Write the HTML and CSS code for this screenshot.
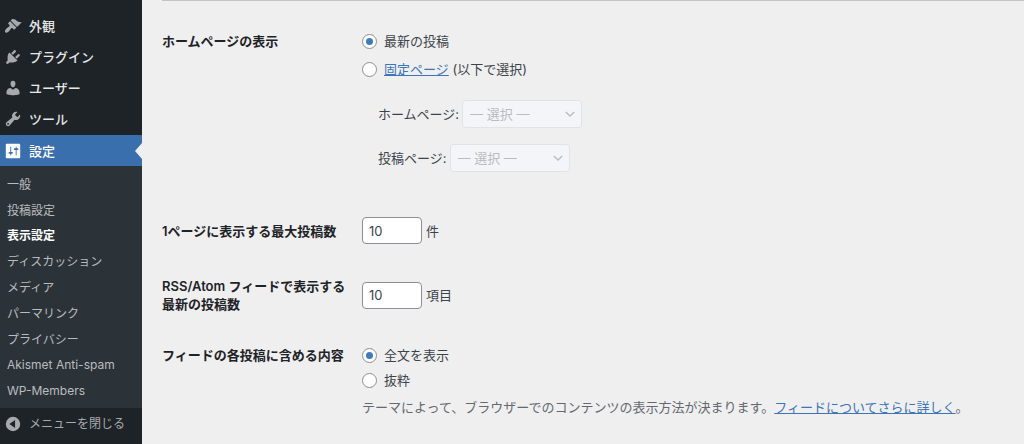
FILE: index.html
```html
<!DOCTYPE html>
<html lang="ja">
<head>
<meta charset="utf-8">
<meta name="viewport" content="width=device-width, initial-scale=1">
<title>表示設定</title>
<link rel="stylesheet" href="styles.css">
</head>
<body>
<nav class="sidebar" aria-label="メインメニュー">
  <ul class="menu">
    <li><a class="menu-link" href="#"><svg class="icon" viewBox="0 0 20 20"><path d="M14.48 11.06L7.41 3.99l1.5-1.5c.5-.56 2.3-.47 3.51.32 1.21.8 1.43 1.28 2.91 2.1 1.18.64 2.45 1.26 4.45.85zm-.71.71L6.7 4.7 4.93 6.47c-.39.39-.39 1.02 0 1.41l1.06 1.06c.39.39.39 1.03 0 1.42-.6.6-1.43 1.11-2.21 1.69-.35.26-.7.53-1.01.84C1.43 14.23.4 16.08 1.4 17.07c.99 1 2.84-.03 4.18-1.36.31-.31.58-.66.85-1.02.57-.78 1.08-1.61 1.69-2.21.39-.39 1.02-.39 1.41 0l1.06 1.06c.39.39 1.02.39 1.41 0z"/></svg>外観</a></li>
    <li><a class="menu-link" href="#"><svg class="icon" viewBox="0 0 20 20"><path d="M13.11 4.36L9.87 7.6 8 5.73l3.24-3.24c.35-.34 1.05-.2 1.56.32.52.51.66 1.21.31 1.55zm-8 1.77l.91-1.12 9.01 9.01-1.19.84c-.71.71-2.63 1.16-3.82 1.16H6.14L4.9 17.26c-.59.59-1.54.59-2.12 0-.59-.58-.59-1.53 0-2.12l1.24-1.24v-3.88c0-1.13.4-3.19 1.09-3.89zm7.26 3.97l3.24-3.24c.34-.35 1.04-.21 1.55.31.52.51.66 1.21.31 1.55l-3.24 3.25z"/></svg>プラグイン</a></li>
    <li><a class="menu-link" href="#"><svg class="icon" viewBox="0 0 20 20"><path d="M10 9.25c-2.27 0-2.73-3.44-2.73-3.44C7 4.02 7.82 2 9.97 2c2.16 0 2.98 2.02 2.71 3.81 0 0-.41 3.44-2.68 3.44zm0 2.57L12.72 10c2.39 0 4.52 2.33 4.52 4.53v2.49s-3.65 1.13-7.24 1.13c-3.65 0-7.24-1.13-7.24-1.13v-2.49c0-2.25 1.94-4.48 4.47-4.48z"/></svg>ユーザー</a></li>
    <li><a class="menu-link" href="#"><svg class="icon" viewBox="0 0 20 20"><path d="M16.68 9.77c-1.34 1.34-3.3 1.67-4.95.99l-5.41 6.52c-.99.99-2.59.99-3.58 0s-.99-2.59 0-3.57l6.52-5.42c-.68-1.65-.35-3.61.99-4.95 1.28-1.28 3.12-1.62 4.72-1.06l-2.89 2.89 2.82 2.82 2.86-2.87c.53 1.58.18 3.39-1.08 4.65zM3.81 16.21c.4.39 1.04.39 1.43 0 .4-.4.4-1.04 0-1.43-.39-.4-1.03-.4-1.43 0-.39.39-.39 1.03 0 1.43z"/></svg>ツール</a></li>
    <li><a class="menu-link current" href="#"><svg class="icon" viewBox="0 0 20 20"><path d="M18 17V3c0-.6-.4-1-1-1H3c-.6 0-1 .4-1 1v14c0 .6.4 1 1 1h14c.6 0 1-.4 1-1zM8 11h1c.55 0 1 .45 1 1s-.45 1-1 1H8v1.500c0 .28-.22.5-.5.5s-.5-.22-.5-.5V13H6c-.55 0-1-.45-1-1s.45-1 1-1h1V5.500c0-.28.22-.5.5-.5s.5.22.5.5V11zm5-2h-1c-.55 0-1-.45-1-1s.45-1 1-1h1V5.500c0-.28.22-.5.5-.5s.5.22.5.5V7h1c.55 0 1 .45 1 1s-.45 1-1 1h-1v5.500c0 .28-.22.5-.5.5s-.5-.22-.5-.5V9z"/></svg>設定</a></li>
  </ul>
  <ul class="submenu">
    <li><a href="#">一般</a></li>
    <li><a href="#">投稿設定</a></li>
    <li><a class="active" href="#" aria-current="page">表示設定</a></li>
    <li><a href="#">ディスカッション</a></li>
    <li><a href="#">メディア</a></li>
    <li><a href="#">パーマリンク</a></li>
    <li><a href="#">プライバシー</a></li>
    <li><a href="#">Akismet Anti-spam</a></li>
    <li><a href="#">WP-Members</a></li>
  </ul>
  <button class="collapse" type="button"><svg class="icon" viewBox="0 0 20 20"><path fill-rule="evenodd" d="M10 2a8 8 0 1 1 0 16 8 8 0 0 1 0-16zM12.300 5.500v9L6 10z"/></svg>メニューを閉じる</button>
</nav>
<main class="content">
  <form class="settings">
    <div class="row row-front" role="group" aria-labelledby="front-title">
      <div class="title" id="front-title">ホームページの表示</div>
      <div class="field">
        <label class="choice"><input type="radio" name="front" checked>最新の投稿</label>
        <div class="choice choice-page"><input type="radio" name="front" id="front-page"><label for="front-page"><a href="#">固定ページ</a> (以下で選択)</label></div>
        <div class="page-pickers">
          <div class="picker"><label for="home-page">ホームページ:</label>
            <span class="select-wrap"><select id="home-page" disabled><option>— 選択 —</option></select><svg class="chevron" viewBox="0 0 20 20"><path d="M4 7l6 6 6-6"/></svg></span></div>
          <div class="picker"><label for="posts-page">投稿ページ:</label>
            <span class="select-wrap"><select id="posts-page" disabled><option>— 選択 —</option></select><svg class="chevron" viewBox="0 0 20 20"><path d="M4 7l6 6 6-6"/></svg></span></div>
        </div>
      </div>
    </div>
    <div class="row row-number">
      <label class="title" for="per-page">1ページに表示する最大投稿数</label>
      <div class="field amount"><input class="number" type="text" inputmode="numeric" id="per-page" value="10">件</div>
    </div>
    <div class="row row-number">
      <label class="title" for="per-feed">RSS/Atom フィードで表示する最新の投稿数</label>
      <div class="field amount"><input class="number" type="text" inputmode="numeric" id="per-feed" value="10">項目</div>
    </div>
    <div class="row" role="group" aria-labelledby="feed-title">
      <div class="title" id="feed-title">フィードの各投稿に含める内容</div>
      <div class="field">
        <label class="choice"><input type="radio" name="feed" checked>全文を表示</label>
        <label class="choice choice-excerpt"><input type="radio" name="feed">抜粋</label>
        <p class="description">テーマによって、ブラウザーでのコンテンツの表示方法が決まります。<a href="#">フィードについてさらに詳しく</a>。</p>
      </div>
    </div>
  </form>
</main>
</body>
</html>
```
FILE: styles.css
```css
* { box-sizing: border-box; }

body {
  margin: 0;
  min-height: 100vh;
  display: flex;
  background: #efefef;
  color: #3c434a;
  font: 13px/18px Inter, "Noto Sans CJK JP", sans-serif;
}

ul { list-style: none; margin: 0; padding: 0; }
a { color: #3d74b8; }
input, select, button { font: inherit; color: inherit; margin: 0; }

/* Sidebar */
.sidebar {
  flex: 0 0 142px;
  display: flex;
  flex-direction: column;
  padding: 11px 0 4px;
  background: #1d2327;
}

.menu-link {
  display: flex;
  align-items: center;
  gap: 7px;
  height: 31px;
  padding: 0 0 2px 4px;
  color: #e6e7e8;
  font-weight: 500;
  text-decoration: none;
}

.icon {
  flex: none;
  width: 18px;
  height: 18px;
  fill: #a7aaad;
}

.current {
  position: relative;
  padding-bottom: 0;
  background: #3a6fae;
  color: #fff;
}

.current .icon { fill: #fff; }

.current::after {
  content: "";
  position: absolute;
  right: 0;
  top: 8px;
  border: solid transparent;
  border-width: 8px 7px 8px 0;
  border-right-color: #efefef;
}

.submenu {
  flex: 1;
  display: grid;
  grid-auto-rows: 1fr;
  padding: 6px 0 4px;
  background: #2c3338;
  font-size: 12px;
}

.submenu li { display: flex; align-items: center; padding-left: 7px; }
.submenu a { color: #b9bcbf; text-decoration: none; }
.submenu .active { color: #fff; font-weight: 700; }

.collapse {
  display: flex;
  align-items: center;
  gap: 7px;
  height: 32px;
  padding: 0 0 0 4px;
  border: 0;
  background: none;
  color: #a7aaad;
  font-size: 12px;
}

/* Settings form */
.content { flex: 1; min-width: 0; padding-left: 20px; }

.settings {
  display: flex;
  flex-direction: column;
  gap: 33px;
  padding-top: 31px;
  border-top: 1px solid #c3c4c7;
}

.row {
  display: grid;
  grid-template-columns: 190px 1fr;
  column-gap: 10px;
}

.row-front { margin-bottom: 12px; }
.row-number { align-items: center; }
.title { color: #1d2327; font-weight: 600; }

.choice { display: flex; align-items: center; gap: 7px; }
.choice-page { margin-top: 10px; }
.choice-excerpt { margin-top: 7px; }

.choice input {
  appearance: none;
  display: grid;
  place-items: center;
  width: 15px;
  height: 15px;
  border: 1px solid #8c8f94;
  border-radius: 50%;
  background: #fff;
}

.choice input:checked::before {
  content: "";
  width: 7px;
  height: 7px;
  border-radius: 50%;
  background: #3d7cc4;
}

.page-pickers {
  display: grid;
  gap: 16px;
  margin-top: 22px;
  padding-left: 16px;
}

.picker { display: flex; align-items: center; gap: 3px; }

.select-wrap { position: relative; display: flex; }

.select-wrap select {
  appearance: none;
  width: 120px;
  height: 28px;
  padding: 0 20px 0 7px;
  border: 1px solid #e2e3e5;
  border-radius: 3px;
  background: #f4f5f9;
  color: #b9bcc0;
  opacity: 1;
}

.chevron {
  position: absolute;
  right: 5px;
  top: 7px;
  width: 14px;
  height: 14px;
  fill: none;
  stroke: #b9bcc0;
  stroke-width: 2;
  pointer-events: none;
}

.amount { display: flex; align-items: center; gap: 4px; }

.number {
  width: 60px;
  height: 27px;
  padding: 0 6px;
  border: 1px solid #8c8f94;
  border-radius: 4px;
  background: #fff;
}

.description { margin: 9px 0 0; color: #646970; }
```
